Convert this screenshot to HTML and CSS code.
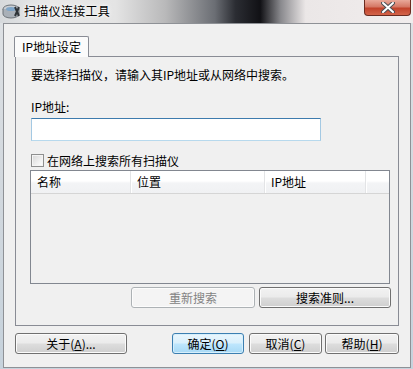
FILE: index.html
```html
<!DOCTYPE html>
<html lang="zh-CN">

<head>
    <meta charset="UTF-8">
    <meta name="viewport" content="width=device-width, initial-scale=1.0">
    <title>扫描仪连接工具</title>
    <link rel="stylesheet" href="styles.css">
</head>

<body>
    <div class="titlebar">
        <svg class="app-icon" width="20" height="18" viewBox="0 0 20 18">
            <ellipse cx="9" cy="6" rx="8" ry="4" fill="#c9ced4" stroke="#6d7379" />
            <path d="M1 6 v5 a8 4 0 0 0 16 0 v-5" fill="#a9b0b8" stroke="#6d7379" />
            <ellipse cx="9" cy="6" rx="5" ry="2" fill="#7fa6c9" />
            <path d="M13 4 l4 9 M17 4 l-4 9" stroke="#2e3338" stroke-width="2" />
        </svg>
        <span class="title">扫描仪连接工具</span>
        <div class="close-btn">
            <svg width="14" height="11" viewBox="0 0 14 11">
                <path d="M2 1 L12 10 M12 1 L2 10" stroke="#4a4f55" stroke-width="4" stroke-linecap="round" />
                <path d="M2 1 L12 10 M12 1 L2 10" stroke="#ffffff" stroke-width="2" stroke-linecap="round" />
            </svg>
        </div>
    </div>

    <div class="window">
        <div class="tabs">
            <div class="tab">IP地址设定</div>
        </div>
        <div class="panel">
            <p class="hint">要选择扫描仪，请输入其IP地址或从网络中搜索。</p>
            <p class="field-label">IP地址:</p>
            <input class="ip-input" type="text">
            <div class="check-row">
                <span class="checkbox"></span>
                <span>在网络上搜索所有扫描仪</span>
            </div>
            <div class="list">
                <div class="list-header">
                    <div class="col col-name">名称</div>
                    <div class="col col-place">位置</div>
                    <div class="col col-ip">IP地址</div>
                    <div class="col col-rest"></div>
                </div>
            </div>
            <div class="search-buttons">
                <button class="btn btn-research" disabled>重新搜索</button>
                <button class="btn btn-criteria">搜索准则...</button>
            </div>
        </div>
        <div class="dialog-buttons">
            <button class="btn btn-about">关于(<u>A</u>)...</button>
            <button class="btn btn-default btn-ok">确定(<u>O</u>)</button>
            <button class="btn btn-cancel">取消(<u>C</u>)</button>
            <button class="btn btn-help">帮助(<u>H</u>)</button>
        </div>
    </div>
</body>

</html>
```

FILE: styles.css
```css
* {
    margin: 0;
    padding: 0;
    box-sizing: border-box;
    font-family: "Noto Sans CJK SC", "Noto Sans", sans-serif;
}

body {
    width: 413px;
    height: 369px;
    overflow: hidden;
    background: linear-gradient(180deg, #dfe2e5 0%, #d2d8de 50%, #c6d2dc 100%);
    font-size: 12px;
    color: #000;
}

.titlebar {
    height: 23px;
    display: flex;
    align-items: flex-start;
    background: linear-gradient(90deg, #d6d9dc 0%, #e9e9e9 12%, #e4e4e4 28%, #b9b9ba 40%, #6b6e74 52%, #2b2d33 57%, #111115 63%, #8a8a8e 68%, #ebe7e7 74%, #f1eded 100%);
}

.app-icon {
    margin: 3px 0 0 2px;
}

.title {
    margin-left: 2px;
    line-height: 22px;
    font-size: 12px;
    letter-spacing: 0.3px;
    text-shadow: 0 0 6px #fff, 0 0 3px #fff;
}

.close-btn {
    margin-left: auto;
    margin-right: 2px;
    width: 47px;
    height: 16px;
    border: 1px solid #6a2b20;
    border-top: none;
    border-radius: 0 0 4px 4px;
    background: linear-gradient(180deg, #e9a99a 0%, #d57865 45%, #c2432b 55%, #d3644a 100%);
    display: flex;
    align-items: center;
    justify-content: center;
}

.window {
    margin-left: 3px;
    width: 408px;
    height: 345px;
    background-color: #f0f0f0;
    border: 1px solid #8e9196;
}

.tabs {
    display: flex;
    margin: 12px 0 0 10px;
}

.tab {
    position: relative;
    z-index: 1;
    width: 75px;
    height: 21px;
    margin-bottom: -1px;
    padding-left: 7px;
    line-height: 19px;
    background-color: #fbfbfb;
    border: 1px solid #898c95;
    border-bottom: none;
    border-radius: 2px 2px 0 0;
}

.panel {
    margin: 0 11px 0 11px;
    height: 270px;
    border: 1px solid #898c95;
    padding: 0 8px 0 15px;
    display: flex;
    flex-direction: column;
}

.hint {
    margin-top: 9px;
    line-height: 18px;
}

.field-label {
    margin-top: 14px;
    line-height: 18px;
}

.ip-input {
    margin-top: 2px;
    width: 290px;
    height: 23px;
    border: 1px solid #a4c9e3;
    border-top-color: #3d7bad;
    border-bottom-color: #b7d9ed;
    background-color: #fff;
    outline: none;
}

.check-row {
    margin-top: 10px;
    height: 18px;
    display: flex;
    align-items: center;
    gap: 3px;
}

.checkbox {
    width: 13px;
    height: 13px;
    border: 1px solid #8e8f8f;
    background: linear-gradient(135deg, #d6d6d6 0%, #f4f4f4 70%, #fff 100%);
    box-shadow: inset 0 0 0 1px #f4f4f4;
}

.list {
    margin: 1px 0 0 -1px;
    width: 360px;
    height: 114px;
    border: 1px solid #828790;
    background-color: #f0f0f0;
}

.list-header {
    display: flex;
    height: 23px;
    background: linear-gradient(180deg, #ffffff 0%, #ffffff 45%, #f3f4f6 55%, #f0f1f3 100%);
    border-bottom: 1px solid #d5d5d5;
}

.col {
    line-height: 22px;
    padding-left: 6px;
    border-right: 1px solid #e3e4e6;
    box-shadow: 1px 0 0 #fff;
}

.col-name {
    width: 100px;
}

.col-place {
    width: 134px;
}

.col-ip {
    width: 101px;
}

.col-rest {
    flex: 1;
    border-right: none;
    box-shadow: none;
}

.search-buttons {
    margin: 3px -1px 0 0;
    display: flex;
    justify-content: flex-end;
    gap: 4px;
}

.btn {
    height: 21px;
    padding: 0;
    font-size: 12px;
    line-height: 18px;
    color: #000;
    border: 1px solid #707070;
    border-radius: 3px;
    background: linear-gradient(180deg, #f2f2f2 0%, #ebebeb 48%, #dddddd 52%, #cfcfcf 100%);
    box-shadow: inset 0 0 0 1px #fbfbfb;
}

.btn u {
    text-decoration: underline;
}

.btn:disabled {
    color: #838383;
    border-color: #adb2b5;
    background: #f4f4f4;
    box-shadow: inset 0 0 0 1px #fcfcfc;
}

.btn-default {
    border-color: #3c7fb1;
    background: linear-gradient(180deg, #eaf6fd 0%, #d9f0fc 48%, #bee6fd 52%, #a7d9f5 100%);
    box-shadow: inset 0 0 0 1px #d6effc;
}

.btn-research {
    width: 124px;
}

.btn-criteria {
    width: 132px;
}

.dialog-buttons {
    margin: 7px 11px 0 11px;
    display: flex;
}

.btn-about {
    width: 112px;
}

.btn-ok {
    margin-left: auto;
    width: 72px;
}

.btn-cancel {
    margin-left: 5px;
    width: 73px;
}

.btn-help {
    margin-left: 3px;
    width: 74px;
}
```
